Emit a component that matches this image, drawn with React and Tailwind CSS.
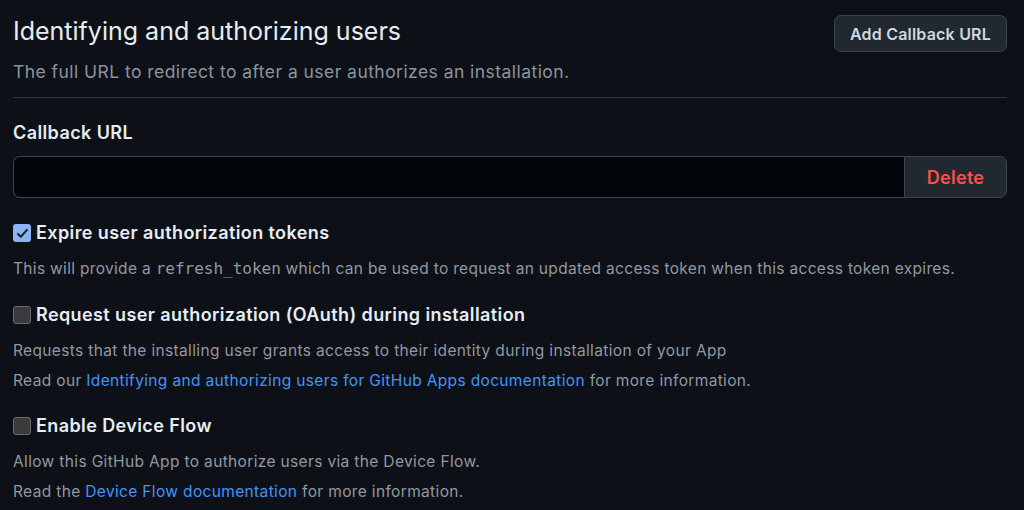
import React from "react";

function Check({ checked }) {
  if (checked) {
    return (
      <span className="inline-flex h-[18px] w-[18px] shrink-0 items-center justify-center rounded-[3px] bg-[#8ab4f8]">
        <svg width="13" height="13" viewBox="0 0 16 16" fill="none">
          <path d="M2.5 8.5 L6 12 L13.5 3.5" stroke="#1f2328" strokeWidth="2.6" strokeLinecap="round" strokeLinejoin="round" />
        </svg>
      </span>
    );
  }
  return (
    <span className="inline-block h-[18px] w-[18px] shrink-0 rounded-[3px] border border-[#6b6b6b] bg-[#3b3b3d]" />
  );
}

export default function App() {
  return (
    <div
      className="h-[510px] w-[1024px] overflow-hidden bg-[#0d1117] pl-[13px] pr-[17px] text-[#e6edf3]"
      style={{ fontFamily: "Inter, 'Noto Sans', sans-serif" }}
    >
      <div className="flex items-start justify-between border-b border-[#30363d] pb-[12px] pt-[15px]">
        <div>
          <h2 className="mt-[1px] text-[25px] font-normal leading-[30px] text-[#e6edf3]">
            Identifying and authorizing users
          </h2>
          <p className="mt-[13px] text-[17.5px] leading-[26px] tracking-[0.45px] text-[#8b949e]">
            The full URL to redirect to after a user authorizes an installation.
          </p>
        </div>
        <button className="h-[37px] rounded-[7px] border border-[#3d444d] bg-[#212830] px-[15px] text-[16px] font-semibold tracking-[0.2px] text-[#d1d7e0]">
          Add Callback URL
        </button>
      </div>

      <div className="mt-[23px] text-[18px] font-semibold leading-[24px] tracking-[0.4px] text-[#e6edf3]">
        Callback URL
      </div>
      <div className="mt-[11px] flex h-[42px]">
        <input
          className="h-full flex-1 rounded-l-[7px] border border-r-0 border-[#3d444d] bg-[#010409] px-3 text-[16px] text-[#e6edf3] outline-none"
          defaultValue=""
        />
        <button className="h-full w-[103px] rounded-r-[7px] border border-[#3d444d] bg-[#212830] text-[18px] font-semibold tracking-[0.3px] text-[#f85149]">
          Delete
        </button>
      </div>

      <label className="mt-[22px] flex items-center gap-[5px] text-[18px] font-semibold leading-[26px] tracking-[0.4px] text-[#e6edf3]">
        <Check checked />
        Expire user authorization tokens
      </label>
      <p className="mt-[8px] text-[15.5px] leading-[30px] tracking-[0.32px] text-[#9198a1]">
        This will provide a{" "}
        <code className="text-[16px] tracking-normal" style={{ fontFamily: "'DejaVu Sans Mono', monospace" }}>
          refresh_token
        </code>{" "}
        which can be used to request an updated access token when this access token expires.
      </p>

      <label className="mt-[18px] flex items-center gap-[5px] text-[18px] font-semibold leading-[26px] tracking-[0.4px] text-[#e6edf3]">
        <Check />
        Request user authorization (OAuth) during installation
      </label>
      <div className="mt-[8px] text-[15.5px] leading-[30px] tracking-[0.35px] text-[#9198a1]">
        <p>Requests that the installing user grants access to their identity during installation of your App</p>
        <p>
          Read our{" "}
          <a className="text-[#4493f8]">Identifying and authorizing users for GitHub Apps documentation</a> for more
          information.
        </p>
      </div>

      <label className="mt-[17px] flex items-center gap-[5px] text-[18px] font-semibold leading-[26px] tracking-[0.4px] text-[#e6edf3]">
        <Check />
        Enable Device Flow
      </label>
      <div className="mt-[8px] text-[15.5px] leading-[30px] tracking-[0.35px] text-[#9198a1]">
        <p>Allow this GitHub App to authorize users via the Device Flow.</p>
        <p>
          Read the <a className="text-[#4493f8]">Device Flow documentation</a> for more information.
        </p>
      </div>
    </div>
  );
}
